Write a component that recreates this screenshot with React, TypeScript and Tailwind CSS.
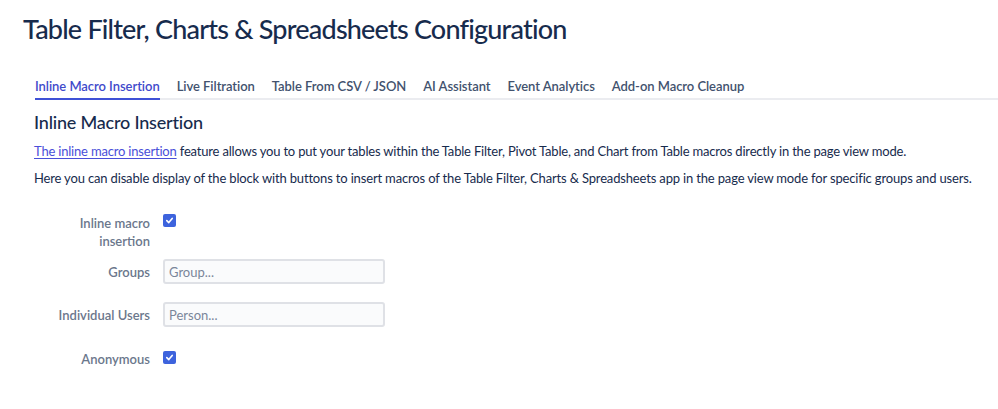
import React from 'react';

const TABS = [
  'Inline Macro Insertion',
  'Live Filtration',
  'Table From CSV / JSON',
  'AI Assistant',
  'Event Analytics',
  'Add-on Macro Cleanup',
];

const Check: React.FC = () => (
  <span className="inline-flex w-[13px] h-[13px] rounded-[2px] bg-[#3d63dd] items-center justify-center">
    <svg width="9" height="9" viewBox="0 0 10 10" fill="none">
      <path d="M2 5.2 L4.2 7.3 L8 2.7" stroke="white" strokeWidth="1.8" strokeLinecap="round" strokeLinejoin="round" />
    </svg>
  </span>
);

const Label: React.FC<{ children: React.ReactNode; wrap?: boolean }> = ({ children, wrap }) => (
  <div className={`w-[150px] shrink-0 text-right font-semibold text-[#6b778c] ${wrap ? 'pl-[70px]' : 'whitespace-nowrap'}`}>{children}</div>
);

export default function App() {
  return (
    <div className="w-[998px] h-[409px] bg-white overflow-hidden text-[#172b4d]" style={{ fontFamily: 'Lato, "Noto Sans", sans-serif' }}>
      <h1 className="pl-[23px] pt-[12px] text-[27px] leading-[34px] font-medium tracking-[-0.8px] text-[#172b4d]">
        Table Filter, Charts &amp; Spreadsheets Configuration
      </h1>

      <div className="mt-[30px] ml-[35px] flex gap-[17px] border-b-2 border-[#ebecf0] h-[24px]">
        {TABS.map((t, i) => (
          <div
            key={t}
            className={`text-[13px] font-semibold leading-[20px] tracking-[-0.05px] -mb-[2px] border-b-2 ${i === 0 ? 'text-[#3f4acb] border-[#3f51d6]' : 'text-[#42526e] border-transparent'}`}
          >
            {t}
          </div>
        ))}
      </div>

      <div className="pl-[34px]">
        <h2 className="mt-[10px] text-[18px] leading-[24px] font-medium tracking-[-0.2px] text-[#172b4d]">Inline Macro Insertion</h2>
        <p className="mt-[7px] text-[13px] leading-[20px] tracking-[-0.19px] whitespace-nowrap">
          <a className="text-[#4a4fd9] underline underline-offset-2">The inline macro insertion</a> feature allows you to put your tables within the Table Filter, Pivot Table, and Chart from Table macros directly in the page view mode.
        </p>
        <p className="mt-[7px] text-[13px] leading-[20px] tracking-[-0.16px] whitespace-nowrap">
          Here you can disable display of the block with buttons to insert macros of the Table Filter, Charts &amp; Spreadsheets app in the page view mode for specific groups and users.
        </p>
      </div>

      <div className="mt-[26px] flex flex-col text-[13px] leading-[18px]">
        <div className="flex items-start gap-[13px]">
          <Label wrap>Inline macro insertion</Label>
          <Check />
        </div>

        <div className="mt-[9px] flex items-center gap-[13px]">
          <Label>Groups</Label>
          <div className="w-[222px] h-[25px] bg-[#fafbfc] border-2 border-[#dfe1e6] rounded-[3px] px-[4px] flex items-center text-[#7a869a]">Group...</div>
        </div>

        <div className="mt-[18px] flex items-center gap-[13px]">
          <Label>Individual Users</Label>
          <div className="w-[222px] h-[25px] bg-[#fafbfc] border-2 border-[#dfe1e6] rounded-[3px] px-[4px] flex items-center text-[#7a869a]">Person...</div>
        </div>

        <div className="mt-[23px] flex items-start gap-[13px]">
          <Label>Anonymous</Label>
          <div className="-mt-[2px]"><Check /></div>
        </div>
      </div>
    </div>
  );
}
